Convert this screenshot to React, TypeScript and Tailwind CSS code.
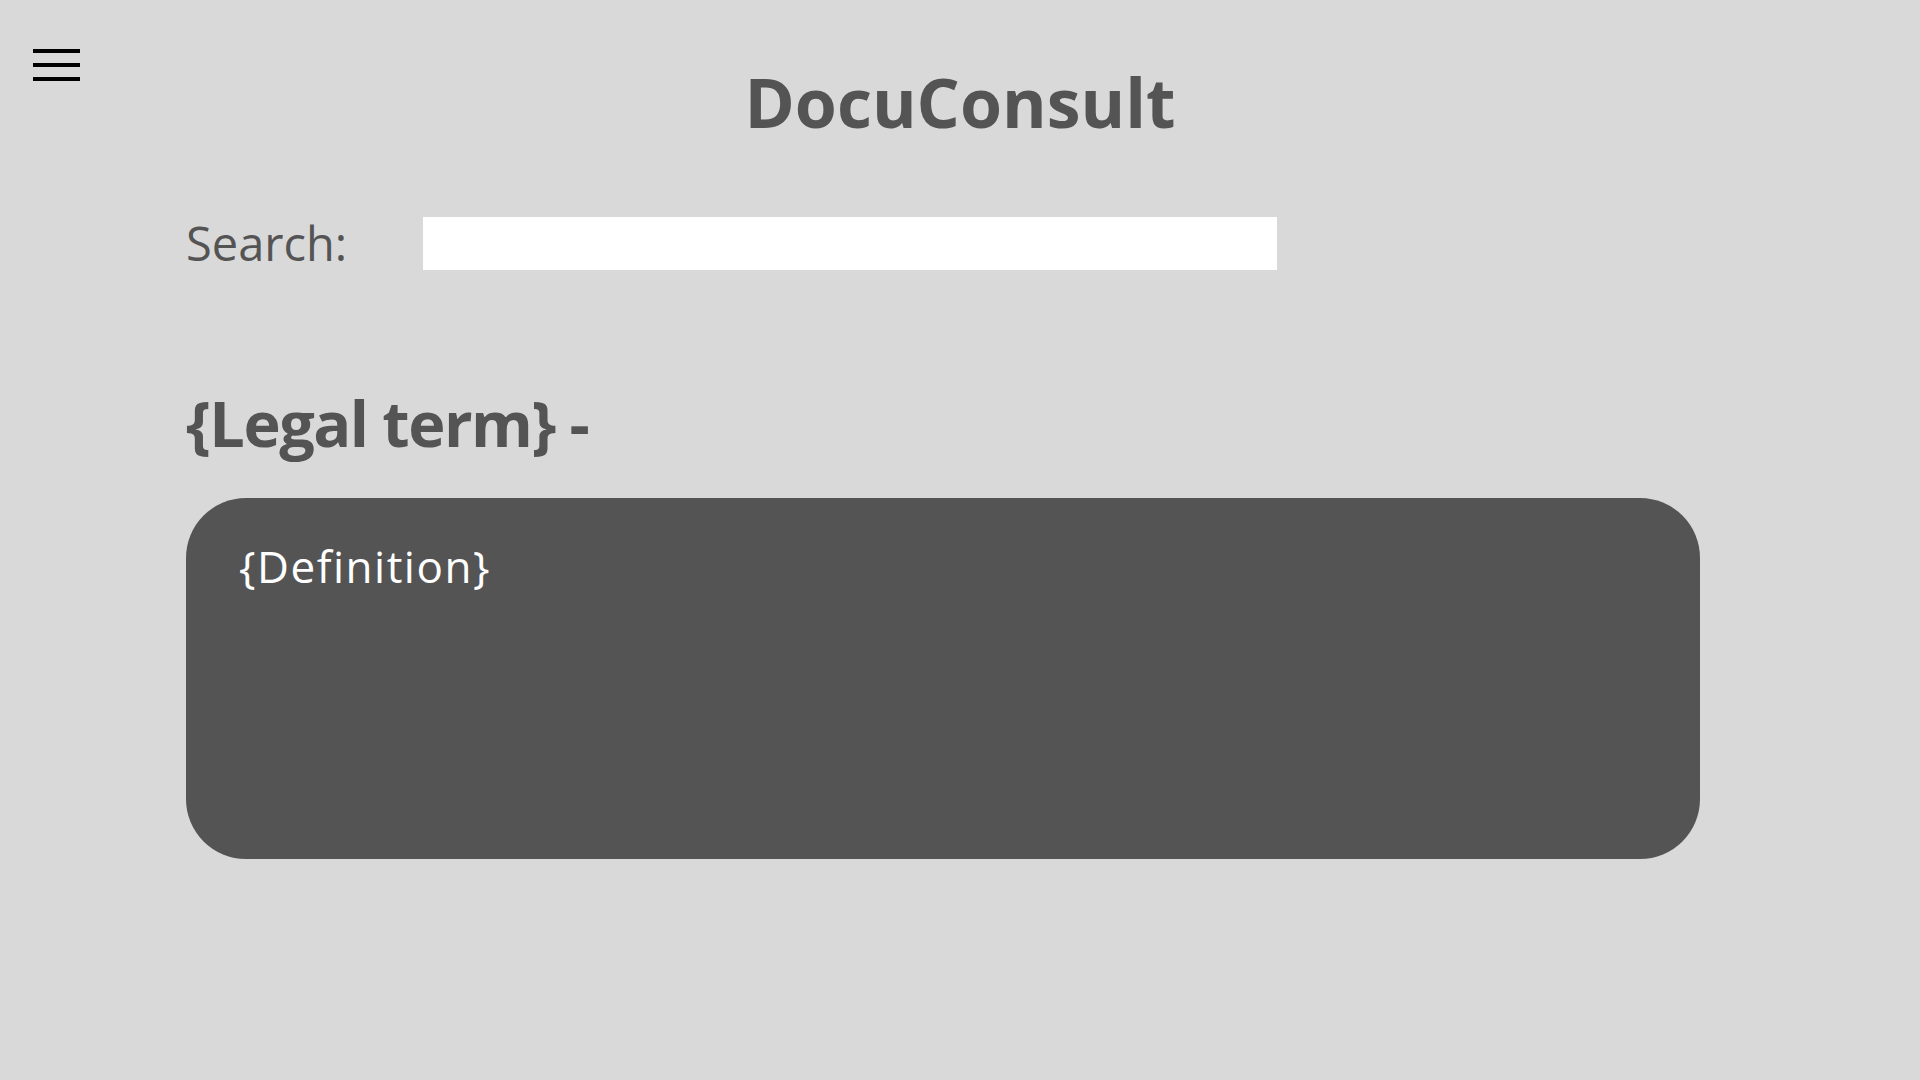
const Hamburger = () => (
  <button className="flex flex-col gap-[10px] w-[47px] pt-[49px] ml-[33px]" aria-label="Menu">
    <span className="block h-[4px] w-full bg-black" />
    <span className="block h-[4px] w-full bg-black" />
    <span className="block h-[4px] w-full bg-black" />
  </button>
);

const App = () => {
  return (
    <div className="min-h-screen w-full bg-[#d9d9d9] text-[#545454] font-['Open_Sans',sans-serif]">
      <header className="grid grid-cols-[1fr_auto_1fr] items-start">
        <div>
          <Hamburger />
        </div>
        <h1 className="mt-[68px] text-[68px] leading-none font-bold">DocuConsult</h1>
        <div />
      </header>

      <main className="pl-[186px]">
        <div className="mt-[81px] flex items-center">
          <label className="w-[237px] text-[47px] leading-none">Search:</label>
          <input type="text" className="h-[53px] w-[854px] bg-white outline-none px-3 text-2xl" />
        </div>

        <h2 className="mt-[121px] text-[63px] leading-none font-bold tracking-[-1.5px]">{"{Legal term} -"}</h2>

        <div className="mt-[44px] w-[1514px] h-[361px] rounded-[60px] bg-[#545454] pt-[46px] pl-[53px]">
          <p className="text-[44px] leading-none text-white tracking-[1.5px]">{"{Definition}"}</p>
        </div>
      </main>
    </div>
  );
};

export default App;
